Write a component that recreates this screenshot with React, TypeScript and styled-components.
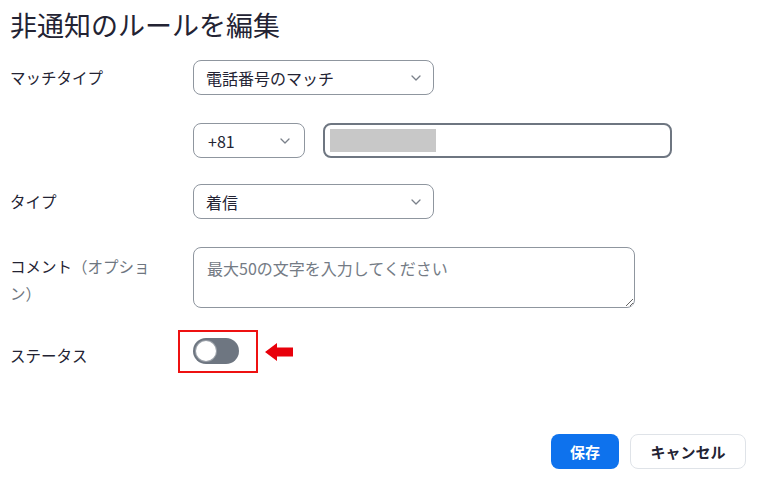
import styled, { createGlobalStyle } from "styled-components";

const GlobalStyle = createGlobalStyle`
  body {
    margin: 0;
    background: #ffffff;
    font-family: "Noto Sans CJK JP", "Noto Sans", sans-serif;
    color: #232333;
  }
  * {
    box-sizing: border-box;
  }
`;

const Chevron = () => (
  <svg width="10" height="6" viewBox="0 0 10 6" fill="none">
    <path d="M1 1l4 4 4-4" stroke="#7a808a" strokeWidth="1.3" strokeLinecap="round" strokeLinejoin="round" />
  </svg>
);

const ArrowLeft = () => (
  <svg width="28" height="18" viewBox="0 0 28 18">
    <path d="M0 9L12 0V4.5H28V13.5H12V18Z" fill="#e8000b" />
  </svg>
);

const App = () => {
  return (
    <Page>
      <GlobalStyle />
      <Title>非通知のルールを編集</Title>

      <Row $mt={17} $align="center">
        <Label>マッチタイプ</Label>
        <Select $width={241}>
          <span>電話番号のマッチ</span>
          <Chevron />
        </Select>
      </Row>

      <Row $mt={28} $align="center">
        <Label />
        <Select $width={112} $padLeft={14} $padRight={14}>
          <span>+81</span>
          <Chevron />
        </Select>
        <PhoneInput>
          <Redacted />
        </PhoneInput>
      </Row>

      <Row $mt={26} $align="center">
        <Label>タイプ</Label>
        <Select $width={241}>
          <span>着信</span>
          <Chevron />
        </Select>
      </Row>

      <Row $mt={28} $align="flex-start">
        <Label $padTop={6}>
          <span>コメント</span>
          <Optional>（オプション）</Optional>
        </Label>
        <Comment placeholder="最大50の文字を入力してください" />
      </Row>

      <Row $mt={30} $align="flex-start">
        <Label $padTop={4}>ステータス</Label>
        <ToggleArea>
          <Toggle>
            <Knob />
          </Toggle>
          <Highlight />
          <Pointer>
            <ArrowLeft />
          </Pointer>
        </ToggleArea>
      </Row>

      <Actions>
        <PrimaryButton>保存</PrimaryButton>
        <SecondaryButton>キャンセル</SecondaryButton>
      </Actions>
    </Page>
  );
};

const Page = styled.div`
  width: 768px;
  height: 494px;
  padding: 0 22px 0 10px;
`;

const Title = styled.h1`
  margin: 0;
  padding-top: 7px;
  font-size: 27px;
  line-height: 36px;
  font-weight: 400;
  color: #232333;
`;

const Row = styled.div<{ $mt: number; $align: string }>`
  display: flex;
  align-items: ${(p) => p.$align};
  gap: 18px;
  margin-top: ${(p) => p.$mt}px;
`;

const Label = styled.div<{ $padTop?: number }>`
  width: 165px;
  flex-shrink: 0;
  padding-right: 15px;
  padding-top: ${(p) => p.$padTop ?? 0}px;
  font-size: 15.5px;
  line-height: 27px;
  color: #232333;
`;

const Optional = styled.span`
  color: #6e7680;
`;

const Select = styled.div<{ $width: number; $padLeft?: number; $padRight?: number }>`
  width: ${(p) => p.$width}px;
  height: 35px;
  display: flex;
  align-items: center;
  justify-content: space-between;
  padding: 0 ${(p) => p.$padRight ?? 12}px 0 ${(p) => p.$padLeft ?? 12}px;
  border: 1px solid #8f969f;
  border-radius: 8px;
  font-size: 16px;
  color: #232333;
  background: #ffffff;
`;

const PhoneInput = styled.div`
  width: 349px;
  height: 35px;
  display: flex;
  align-items: center;
  padding-left: 5px;
  border: 2px solid #6e7681;
  border-radius: 8px;
`;

const Redacted = styled.div`
  width: 106px;
  height: 23px;
  background: #c8c8c8;
`;

const Comment = styled.textarea`
  width: 442px;
  height: 61px;
  margin: 0;
  padding: 8px 13px;
  border: 1px solid #8f969f;
  border-radius: 8px;
  font-family: "Noto Sans CJK JP", "Noto Sans", sans-serif;
  font-size: 16px;
  line-height: 24px;
  color: #232333;
  outline: none;

  &::placeholder {
    color: #747b85;
  }
`;

const ToggleArea = styled.div`
  position: relative;
  width: 46px;
  height: 26px;
`;

const Toggle = styled.div`
  width: 46px;
  height: 26px;
  border-radius: 13px;
  background: #6e7681;
  padding: 3px;
`;

const Knob = styled.div`
  width: 20px;
  height: 20px;
  border-radius: 50%;
  background: #ffffff;
  box-shadow: 0 0 0 1px #9aa0a8;
`;

const Highlight = styled.div`
  position: absolute;
  left: -15px;
  top: -8px;
  width: 80px;
  height: 43px;
  border: 2px solid #ee1111;
`;

const Pointer = styled.div`
  position: absolute;
  left: 72px;
  top: 5px;
  display: flex;
`;

const Actions = styled.div`
  display: flex;
  justify-content: flex-end;
  gap: 11px;
  margin-top: 65px;
`;

const PrimaryButton = styled.button`
  height: 35px;
  padding: 0 19px;
  border: none;
  border-radius: 8px;
  background: #0e72ed;
  color: #ffffff;
  font-family: "Noto Sans CJK JP", "Noto Sans", sans-serif;
  font-size: 15px;
  font-weight: 700;
`;

const SecondaryButton = styled.button`
  height: 35px;
  width: 116px;
  border: 1px solid #dfe3e8;
  border-radius: 8px;
  background: #ffffff;
  color: #232333;
  font-family: "Noto Sans CJK JP", "Noto Sans", sans-serif;
  font-size: 15px;
  font-weight: 700;
`;

export default App;
